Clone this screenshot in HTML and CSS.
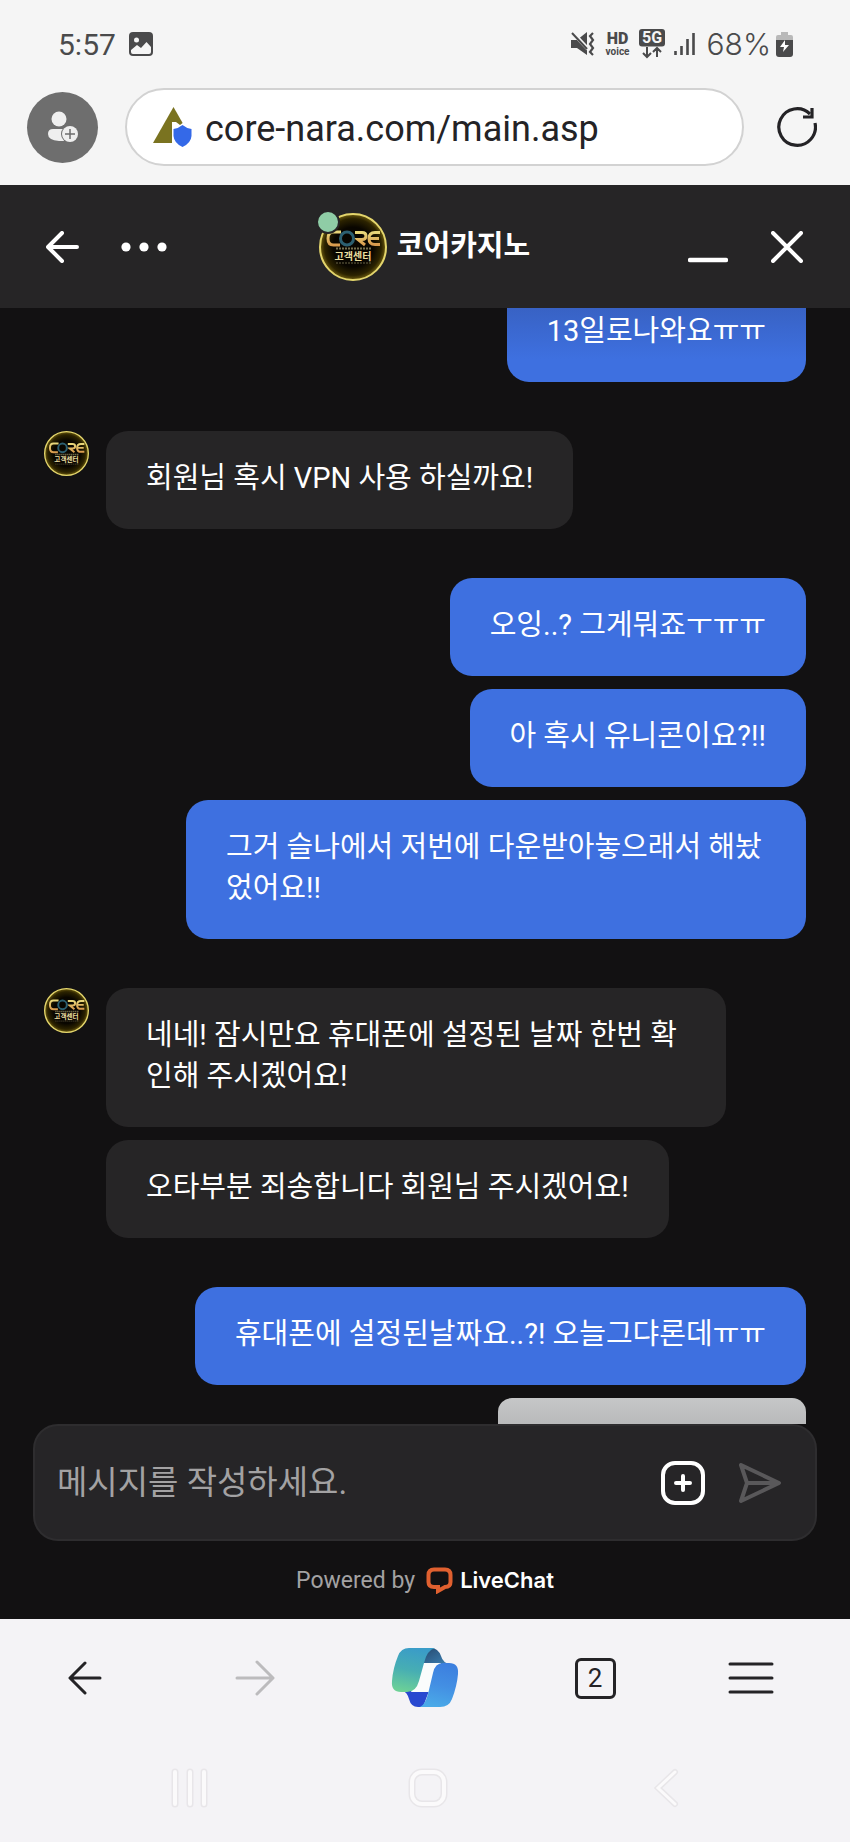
FILE: index.html
```html
<!DOCTYPE html>
<html lang="ko">
<head>
  <meta charset="UTF-8">
  <meta name="viewport" content="width=device-width, initial-scale=1">
  <title>코어카지노</title>
  <link rel="stylesheet" href="styles.css">
</head>
<body>
  <header class="browser-top">
    <div class="status-bar">
      <div class="status-left">
        <span class="clock">5:57</span>
        <svg width="24" height="24" viewBox="0 0 24 24"><rect width="24" height="24" rx="4" fill="#4a4a4b"/><circle cx="7.500" cy="8" r="2.500" fill="#f5f5f5"/><path d="M2 18L8 13L12 16L17.500 10L22 15V20Q22 22 20 22H4Q2 22 2 20Z" fill="#f5f5f5"/></svg>
      </div>
      <div class="status-right">
        <svg width="24" height="24" viewBox="0 0 24 24"><path d="M0 8H6L16 0V23L6 16H0Z" fill="#4a4a4b"/><path d="M1 0L17 17" stroke="#f5f5f5" stroke-width="4"/><path d="M1 1L16 17" stroke="#4a4a4b" stroke-width="2"/><path d="M22 1L19 4L22 8L19 12L22 16L19 20L22 23" fill="none" stroke="#4a4a4b" stroke-width="2.200"/></svg>
        <div class="hd"><b>HD</b><span>voice</span></div>
        <svg width="26" height="30" viewBox="0 0 26 30"><rect width="26" height="17.500" rx="3" fill="#4a4a4b"/><text x="13" y="14" class="five-g">5G</text><path d="M8 18V28M4 24L8 28L12 24M18 28V19M14 23L18 19L22 23" fill="none" stroke="#4a4a4b" stroke-width="2"/></svg>
        <svg class="signal" width="22" height="24" viewBox="0 0 22 24"><path d="M1.500 19V23M7.500 14V23M13.500 7V23M19.500 1V23" stroke="#4a4a4b" stroke-width="2.600"/></svg>
        <span class="percent">68%</span>
        <svg width="17" height="25" viewBox="0 0 17 25"><path d="M5 0H12V3H15Q17 3 17 5V10H0V5Q0 3 2 3H5Z" fill="#b9b9b9"/><path d="M0 8H17V22Q17 25 14 25H3Q0 25 0 22Z" fill="#4a4a4b"/><path d="M9 8L4 15H8L7 20L13 13H9Z" fill="#fff"/></svg>
      </div>
    </div>
    <div class="address-bar">
      <button class="profile" aria-label="프로필">
        <svg width="32" height="32" viewBox="0 0 32 32"><circle cx="12" cy="8" r="7.500" fill="#efefef"/><path d="M6 18H18V30H12Q1 29 1 23Q1 18 6 18Z" fill="#efefef"/><circle cx="23" cy="23" r="9" fill="#6e6e6e"/><circle cx="23" cy="23" r="8" fill="#efefef"/><path d="M18 23H28M23 18V28" stroke="#6e6e6e" stroke-width="1.500"/></svg>
      </button>
      <label class="url-pill">
        <svg width="41" height="40" viewBox="0 0 41 40"><path d="M20.500 0L41 36H0Z" fill="#7a7320"/><path d="M19 15H23L27 18L31 15L41 20V40H19Z" fill="#fff"/><path d="M29.500 18Q33 21 38.500 22V29Q38 36 29.500 40Q21 36 20.500 29V22Q26 21 29.500 18Z" fill="#3469e8"/></svg>
        <input type="text" value="core-nara.com/main.asp" aria-label="주소">
      </label>
      <button class="reload" aria-label="새로고침">
        <svg width="40" height="40" viewBox="0 0 40 40" fill="none" stroke="#242326" stroke-width="3.200"><path d="M38 16A18.300 18.300 0 1 1 33 7"/><path d="M35 1V10H26"/></svg>
      </button>
    </div>
  </header>

  <main class="chat">
    <div class="chat-header">
      <div class="header-left">
        <button aria-label="뒤로">
          <svg width="34" height="32" viewBox="0 0 34 32" fill="none" stroke="#fff" stroke-width="4" stroke-linecap="round" stroke-linejoin="round"><path d="M16 2L2 16L16 30M3 16H31"/></svg>
        </button>
        <button aria-label="메뉴">
          <svg width="46" height="10" viewBox="0 0 46 10" fill="#fff"><circle cx="5" cy="5" r="4.600"/><circle cx="23" cy="5" r="4.600"/><circle cx="41" cy="5" r="4.600"/></svg>
        </button>
      </div>
      <div class="agent">
        <div class="agent-photo">
          <!-- the small avatars reuse this logo -->
          <svg width="68" height="68" viewBox="0 0 68 68">
            <defs>
              <radialGradient id="glow">
                <stop offset="0.6" stop-color="#090600"/>
                <stop offset="0.86" stop-color="#2c2300"/>
                <stop offset="1" stop-color="#6e5d10"/>
              </radialGradient>
              <linearGradient id="gold" x1="0" y1="0" x2="0" y2="1">
                <stop offset="0" stop-color="#e8d77a"/>
                <stop offset="1" stop-color="#d99b4e"/>
              </linearGradient>
            </defs>
            <g id="core-logo">
              <circle cx="34" cy="34" r="33" fill="url(#glow)" stroke="#e3d56c" stroke-width="2"/>
              <g fill="none" stroke="url(#gold)" stroke-width="3">
                <path d="M22 19H14.500Q9 19 9 25.500T14.500 32H21"/>
                <path d="M36 19.500H43Q47 19.500 47 23T43 26.500H39L46 32"/>
                <path d="M61 19.500H56Q50 19.500 50 25.500T56 31.500H61M51 25.500H60"/>
              </g>
              <circle cx="28" cy="25.500" r="6.500" fill="none" stroke="#2c5f70" stroke-width="3"/>
              <path d="M17 35.500H52" stroke="#76704f" stroke-width="2" stroke-dasharray="2 1"/>
              <text x="34" y="47" class="logo-text">고객센터</text>
              <path d="M17 50H52" stroke="#6a6446" stroke-width="1" stroke-dasharray="2 1"/>
            </g>
          </svg>
          <span class="online"></span>
        </div>
        <h1>코어카지노</h1>
      </div>
      <div class="header-right">
        <button aria-label="최소화">
          <svg width="40" height="32" viewBox="0 0 40 32"><path d="M2 29H38" stroke="#fff" stroke-width="4.500" stroke-linecap="round"/></svg>
        </button>
        <button aria-label="닫기">
          <svg width="32" height="32" viewBox="0 0 32 32"><path d="M2 2L30 30M30 2L2 30" stroke="#fff" stroke-width="4" stroke-linecap="round"/></svg>
        </button>
      </div>
    </div>

    <div class="messages">
      <div class="message-list">
        <div class="group mine">
          <p class="bubble scrolled">13일로나와요ㅠㅠ</p>
        </div>
        <div class="group theirs">
          <svg class="avatar" width="45" height="45" viewBox="0 0 68 68"><use href="#core-logo"/></svg>
          <p class="bubble">회원님 혹시 VPN 사용 하실까요!</p>
        </div>
        <div class="group mine">
          <p class="bubble">오잉..? 그게뭐죠ㅜㅠㅠ</p>
          <p class="bubble">아 혹시 유니콘이요?!!</p>
          <p class="bubble">그거 슬나에서 저번에 다운받아놓으래서 해놨었어요!!</p>
        </div>
        <div class="group theirs">
          <svg class="avatar" width="45" height="45" viewBox="0 0 68 68"><use href="#core-logo"/></svg>
          <p class="bubble">네네! 잠시만요 휴대폰에 설정된 날짜 한번 확인해 주시곘어요!</p>
          <p class="bubble">오타부분 죄송합니다 회원님 주시겠어요!</p>
        </div>
        <div class="group mine">
          <p class="bubble">휴대폰에 설정된날짜요..?! 오늘그댜론데ㅠㅠ</p>
          <div class="attachment"></div>
        </div>
      </div>
    </div>

    <form class="composer">
      <input type="text" placeholder="메시지를 작성하세요." aria-label="메시지">
      <button type="button" aria-label="첨부">
        <svg width="46" height="46" viewBox="0 0 46 46" fill="none" stroke="#fff" stroke-width="4" stroke-linecap="round"><rect x="3" y="3" width="40" height="40" rx="12"/><path d="M23 16V30M16 23H30"/></svg>
      </button>
      <button type="submit" aria-label="보내기">
        <svg width="44" height="42" viewBox="0 0 44 42" fill="none" stroke="#59585a" stroke-width="4" stroke-linejoin="round"><path d="M3 3L41 21L3 39L9 21ZM9 21H39"/></svg>
      </button>
    </form>

    <div class="powered">
      <span>Powered by</span>
      <a href="#">
        <svg width="27" height="27" viewBox="0 0 27 27"><path d="M8 2.500H19Q24.500 2.500 24.500 8V15Q24.500 20 19 20L12 24V20H8Q2.500 20 2.500 15V8Q2.500 2.500 8 2.500Z" fill="none" stroke="#e0602f" stroke-width="4"/></svg>
        LiveChat
      </a>
    </div>
  </main>

  <footer class="browser-bottom">
    <nav class="toolbar">
      <button aria-label="이전">
        <svg width="34" height="34" viewBox="0 0 34 34" fill="none" stroke="#242326" stroke-width="3" stroke-linecap="round" stroke-linejoin="round"><path d="M17 2L2 17L17 32M3 17H32"/></svg>
      </button>
      <button aria-label="다음">
        <svg width="40" height="36" viewBox="0 0 40 36" fill="none" stroke="#bcbbbd" stroke-width="3" stroke-linecap="round" stroke-linejoin="round"><path d="M22 2L38 18L22 34M37 18H2"/></svg>
      </button>
      <button aria-label="Copilot">
        <svg width="68" height="60" viewBox="0 0 68 60">
          <defs>
            <linearGradient id="cp1" x1="0.500" y1="0" x2="0.300" y2="1"><stop offset="0" stop-color="#3a9cc8"/><stop offset="0.500" stop-color="#47aeb3"/><stop offset="1" stop-color="#6dd196"/></linearGradient>
            <linearGradient id="cp2" x1="0.600" y1="0" x2="0.400" y2="1"><stop offset="0" stop-color="#3c7fdf"/><stop offset="0.500" stop-color="#438fe3"/><stop offset="1" stop-color="#4aaae8"/></linearGradient>
            <linearGradient id="cp3" x1="0" y1="0" x2="1" y2="1"><stop offset="0" stop-color="#26496f"/><stop offset="1" stop-color="#3d82b5"/></linearGradient>
          </defs>
          <path d="M34 0H40Q47 0 50 8Q52 15 59 16H32Z" fill="url(#cp3)"/>
          <path d="M12 43H38L32 59H27Q20 59 18 51Q16 44 12 43Z" fill="#2848d0"/>
          <path d="M32 15H50L38 44H20Z" fill="#fafcfc"/>
          <path d="M18 0H44Q36 2 33 15L28 33Q25 44 16 44H10Q0 44 1 33Q2 20 7 8Q10 0 18 0Z" fill="url(#cp1)"/>
          <path d="M52 15H58Q68 15 67 26Q66 38 61 51Q58 59 49 59H29Q34 57 37 46L42 25Q44 15 52 15Z" fill="url(#cp2)"/>
        </svg>
      </button>
      <button aria-label="탭">
        <span class="tab-count">2</span>
      </button>
      <button class="more" aria-label="더보기">
        <svg width="46" height="34" viewBox="0 0 46 34"><path d="M2 3H44M2 17H44M2 31H44" stroke="#242326" stroke-width="3" stroke-linecap="round"/></svg>
      </button>
    </nav>
    <nav class="system-nav">
      <button aria-label="최근 앱">
        <svg width="38" height="40" viewBox="0 0 38 40" stroke-linecap="round"><path d="M4 4V36M19 4V36M33 4V36" stroke="#e8e6e9" stroke-width="7"/><path d="M4 4V36M19 4V36M33 4V36" stroke="#fbfafb" stroke-width="4"/></svg>
      </button>
      <button aria-label="홈">
        <svg width="40" height="40" viewBox="0 0 40 40" fill="none"><rect x="4" y="4" width="32" height="32" rx="10" stroke="#e8e6e9" stroke-width="7"/><rect x="4" y="4" width="32" height="32" rx="10" stroke="#fbfafb" stroke-width="4"/></svg>
      </button>
      <button aria-label="뒤로 가기">
        <svg width="26" height="40" viewBox="0 0 26 40" fill="none" stroke-linecap="round"><path d="M21 4L4 20L21 36" stroke="#e8e6e9" stroke-width="6"/><path d="M21 4L4 20L21 36" stroke="#fbfafb" stroke-width="3"/></svg>
      </button>
    </nav>
  </footer>
</body>
</html>
```
FILE: styles.css
```css
* {
  box-sizing: border-box;
}

body {
  margin: 0;
  min-height: 100vh;
  display: flex;
  flex-direction: column;
  background-color: #f4f3f6;
  font-family: Roboto, "Noto Sans CJK KR", sans-serif;
}

button {
  display: flex;
  align-items: center;
  justify-content: center;
  padding: 0;
  border: none;
  background: none;
  font-family: inherit;
  cursor: pointer;
}

svg {
  display: block;
  flex-shrink: 0;
}

input {
  flex: 1;
  min-width: 0;
  padding: 0;
  border: none;
  outline: none;
  background: none;
  font-family: inherit;
}

.logo-text {
  font-size: 10px;
  font-weight: bold;
  fill: #ecdfa0;
  text-anchor: middle;
}

/* browser top */
.browser-top {
  height: 185px;
  background-color: #f5f5f5;
}

.status-bar {
  display: flex;
  justify-content: space-between;
  align-items: center;
  height: 88px;
  padding: 0 57px 0 58px;
  color: #4a4a4b;
}

.status-left,
.status-right {
  display: flex;
  align-items: center;
}

.status-left {
  gap: 13px;
}

.status-right {
  gap: 5px;
}

.clock {
  font-size: 30px;
}

.hd {
  display: flex;
  flex-direction: column;
  align-items: center;
  margin: 0 4px 0 6px;
  font-size: 10px;
  line-height: 12px;
  font-weight: bold;
}

.hd b {
  font-family: Roboto, sans-serif;
  font-size: 16px;
  line-height: 15px;
}

.five-g {
  font-size: 16px;
  font-weight: bold;
  fill: #f5f5f5;
  text-anchor: middle;
}

.signal {
  margin: 0 6px 0 4px;
}

.percent {
  font-family: Inter, sans-serif;
  font-size: 30px;
  font-weight: 300;
}

.address-bar {
  display: flex;
  align-items: center;
  padding: 0 33px 0 27px;
}

.profile {
  width: 71px;
  height: 71px;
  border-radius: 50%;
  background-color: #6e6e6e;
}

.url-pill {
  flex: 1;
  display: flex;
  align-items: center;
  gap: 11px;
  height: 78px;
  margin: 0 33px 0 27px;
  padding: 0 26px;
  border: 2px solid #d2d2d2;
  border-radius: 40px;
  background-color: #fff;
}

.url-pill input {
  height: 60px;
  padding-top: 3px;
  color: #242326;
  font-size: 36px;
}

/* chat */
.chat {
  flex: 1;
  display: flex;
  flex-direction: column;
  background-color: #121112;
}

.chat-header {
  display: grid;
  grid-template-columns: 1fr auto 1fr;
  align-items: center;
  height: 123px;
  padding: 0 47px 0 46px;
  background-color: #262526;
}

.header-left,
.header-right {
  display: flex;
  align-items: center;
  gap: 41px;
}

.header-right {
  justify-content: flex-end;
  gap: 43px;
}

.agent {
  display: flex;
  align-items: center;
  gap: 10px;
}

.agent-photo {
  position: relative;
}

.online {
  position: absolute;
  top: -3px;
  left: -3px;
  width: 24px;
  height: 24px;
  border: 2px solid #262526;
  border-radius: 50%;
  background-color: #8fcda6;
}

.agent h1 {
  margin: 0;
  color: #fff;
  font-size: 29px;
  line-height: 41px;
}

.messages {
  flex: 1;
  overflow: hidden;
}

/* list is scrolled a little, first bubble goes under the header */
.message-list {
  display: flex;
  flex-direction: column;
  gap: 49px;
  margin-top: -24px;
  padding: 0 44px;
}

.group {
  position: relative;
  display: flex;
  flex-direction: column;
  gap: 13px;
}

.mine {
  align-items: flex-end;
}

.theirs {
  align-items: flex-start;
  padding-left: 62px;
}

.avatar {
  position: absolute;
  top: 0;
  left: 0;
}

.bubble {
  max-width: 620px;
  margin: 0;
  padding: 27px 40px 30px;
  border-radius: 22px;
  background-color: #262526;
  color: #fff;
  font-size: 29px;
  line-height: 41px;
}

.mine .bubble {
  background-color: #3e70e0;
}

.mine .scrolled {
  background: linear-gradient(#3862c4 24px, #3e70e0 75px);
}

.attachment {
  width: 308px;
  height: 26px;
  border-radius: 14px 14px 0 0;
  background: linear-gradient(#c6c7c8, #b9babb);
}

.composer {
  display: flex;
  align-items: center;
  height: 117px;
  margin: 0 33px;
  padding: 0 33px 0 22px;
  border: 2px solid #2e2d2f;
  border-radius: 25px;
  background-color: #262527;
}

.composer input {
  height: 60px;
  color: #fff;
  font-size: 33px;
}

.composer input::placeholder {
  color: #a3a2a3;
}

.composer button {
  margin-left: 32px;
}

.powered {
  display: flex;
  align-items: center;
  justify-content: center;
  gap: 11px;
  height: 78px;
  color: #a3a2a3;
  font-size: 23px;
}

.powered a {
  display: flex;
  align-items: center;
  gap: 7px;
  color: #fff;
  font-family: Inter, sans-serif;
  font-size: 22px;
  font-weight: 600;
  text-decoration: none;
}

/* browser bottom */
.browser-bottom {
  height: 223px;
}

.toolbar {
  display: grid;
  grid-template-columns: repeat(5, 1fr);
  align-items: center;
  height: 118px;
}

.more {
  padding-right: 28px;
}

.tab-count {
  width: 41px;
  height: 41px;
  border: 3px solid #242326;
  border-radius: 6px;
  color: #242326;
  font-size: 26px;
  line-height: 35px;
  text-align: center;
}

.system-nav {
  display: grid;
  grid-template-columns: repeat(3, 1fr);
  align-items: center;
  height: 102px;
  padding: 0 64px 0 71px;
}
```
